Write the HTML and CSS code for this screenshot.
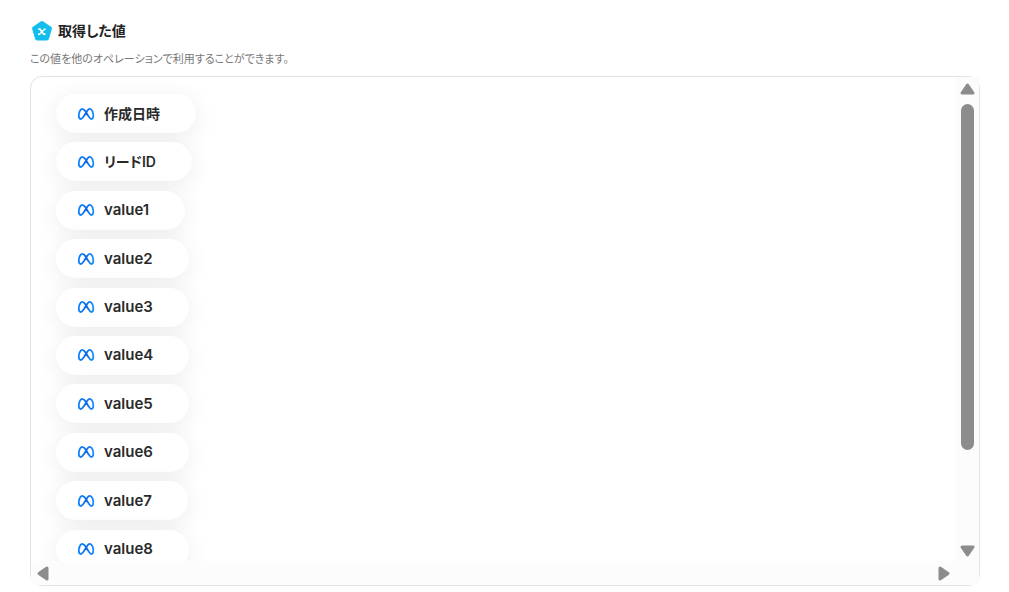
FILE: index.html
```html
<!DOCTYPE html>
<html lang="ja">
<head>
  <meta charset="UTF-8" />
  <meta name="viewport" content="width=device-width, initial-scale=1" />
  <title>取得した値</title>
  <link rel="stylesheet" href="styles.css">
</head>
<body>

  <!-- Shared logo -->
  <svg class="defs" aria-hidden="true">
    <defs>
      <linearGradient id="metaBlue" x1="0" x2="1" y1="0" y2="0">
        <stop offset="0" stop-color="#0a84ff" />
        <stop offset="0.5" stop-color="#0a6ae4" />
        <stop offset="1" stop-color="#1a8cff" />
      </linearGradient>
      <symbol id="meta" viewBox="0 0 18 14">
        <path d="M9 5C7.700 2.800 6.500 1.900 5.200 1.900C3.200 1.900 1.800 5.400 1.800 8.800C1.800 11 2.500 12 3.800 12C5.300 12 6.400 10.200 9 5.700C10.600 2.900 11.600 1.900 12.900 1.900C15 1.900 16.300 5.400 16.300 8.800C16.300 11 15.600 12 14.400 12C12.900 12 11.800 10 9 5Z" fill="none" stroke="url(#metaBlue)" stroke-width="1.800" stroke-linejoin="round" />
      </symbol>
    </defs>
  </svg>

  <header>
    <h1>
      <svg class="badge" viewBox="0 0 20 20" aria-hidden="true">
        <path d="M8.700 0.500Q10 -0.300 11.300 0.500L19 5.800Q20.200 6.700 19.800 8.100L17 17.800Q16.500 19.500 14.800 19.500H5.200Q3.500 19.500 3 17.800L0.200 8.100Q-0.200 6.700 1 5.800Z" fill="#13bdec" />
        <path d="M6.300 8.200H8L11.700 13.200H13.600" fill="none" stroke="#fff" stroke-width="1.700" />
        <path d="M13.700 8.200H12.500L7.500 13.200H6" fill="none" stroke="#fff" stroke-width="1.400" />
      </svg>
      取得した値
    </h1>
    <p>この値を他のオペレーションで利用することができます。</p>
  </header>

  <main class="panel">
    <ul class="values">
      <li><button class="ja"><svg><use href="#meta" /></svg>作成日時</button></li>
      <li><button class="ja"><svg><use href="#meta" /></svg>リードID</button></li>
      <li><button><svg><use href="#meta" /></svg>value1</button></li>
      <li><button><svg><use href="#meta" /></svg>value2</button></li>
      <li><button><svg><use href="#meta" /></svg>value3</button></li>
      <li><button><svg><use href="#meta" /></svg>value4</button></li>
      <li><button><svg><use href="#meta" /></svg>value5</button></li>
      <li><button><svg><use href="#meta" /></svg>value6</button></li>
      <li><button><svg><use href="#meta" /></svg>value7</button></li>
      <li><button><svg><use href="#meta" /></svg>value8</button></li>
    </ul>

    <div class="bar vertical">
      <button aria-label="上へ"><svg viewBox="0 0 15 12"><path d="M7.500 2L13 10H2Z" /></svg></button>
      <div class="track"><div class="thumb"></div></div>
      <button aria-label="下へ"><svg viewBox="0 0 15 12"><path d="M7.500 10L13 2H2Z" /></svg></button>
    </div>
    <div class="bar horizontal">
      <button aria-label="左へ"><svg viewBox="0 0 12 15"><path d="M2 7.500L10 2V13Z" /></svg></button>
      <button aria-label="右へ"><svg viewBox="0 0 12 15"><path d="M10 7.500L2 2V13Z" /></svg></button>
    </div>
    <div class="corner"></div>
  </main>

</body>
</html>
```

FILE: styles.css
```css
* {
  box-sizing: border-box;
}
body {
  display: flex;
  flex-direction: column;
  height: 100vh;
  margin: 0;
  padding: 20px 29px 6px 30px;
  background: #fff;
  color: #222;
  font-family: Inter, "Noto Sans CJK JP", sans-serif;
  font-feature-settings: "palt";
}
.defs {
  position: absolute;
  width: 0;
  height: 0;
}
h1 {
  display: flex;
  align-items: center;
  gap: 6px;
  margin: 0;
  padding-left: 2px;
  font-size: 14px;
  font-weight: 600;
  line-height: 22px;
}
.badge {
  width: 20px;
  height: 20px;
}
header p {
  margin: 8px 0;
  color: #777;
  font-size: 11px;
  line-height: 18px;
}
.panel {
  display: grid;
  flex: 1;
  grid-template-columns: 1fr 23px;
  grid-template-rows: 1fr 24px;
  min-height: 0;
  border: 1px solid #e2e2e2;
  border-radius: 12px;
}
.values {
  display: grid;
  grid-auto-rows: 10%;
  min-height: 0;
  margin: 0;
  padding: 0;
  overflow: hidden;
  list-style: none;
}
.values li {
  padding: 17px 0 0 25px;
}
.values button {
  display: flex;
  align-items: center;
  gap: 9px;
  height: 39px;
  padding: 0 36px 0 21px;
  border: 0;
  border-radius: 20px;
  background: #fff;
  box-shadow: 0 4px 24px rgba(0, 0, 0, 0.08);
  color: #2a2a2a;
  font: inherit;
  font-feature-settings: inherit;
  font-size: 15px;
  font-weight: 600;
  line-height: 22px;
}
.values .ja {
  font-size: 14px;
}
.values svg {
  width: 18px;
  height: 14px;
}
.bar {
  display: flex;
  align-items: center;
  background: #fcfcfc;
}
.bar button {
  display: flex;
  padding: 0;
  border: 0;
  background: none;
}
.bar path {
  fill: #8c8c8c;
  stroke: #8c8c8c;
  stroke-width: 3;
  stroke-linejoin: round;
}
.vertical {
  flex-direction: column;
  gap: 9px;
  padding: 6px 0 4px;
}
.vertical svg {
  width: 15px;
  height: 12px;
}
.track {
  flex: 1;
}
.thumb {
  width: 13px;
  height: 80%;
  border-radius: 7px;
  background: #8c8c8c;
}
.horizontal {
  justify-content: space-between;
  padding: 0 6px;
}
.horizontal svg {
  width: 12px;
  height: 15px;
}
.corner {
  background: #fcfcfc;
}
```
